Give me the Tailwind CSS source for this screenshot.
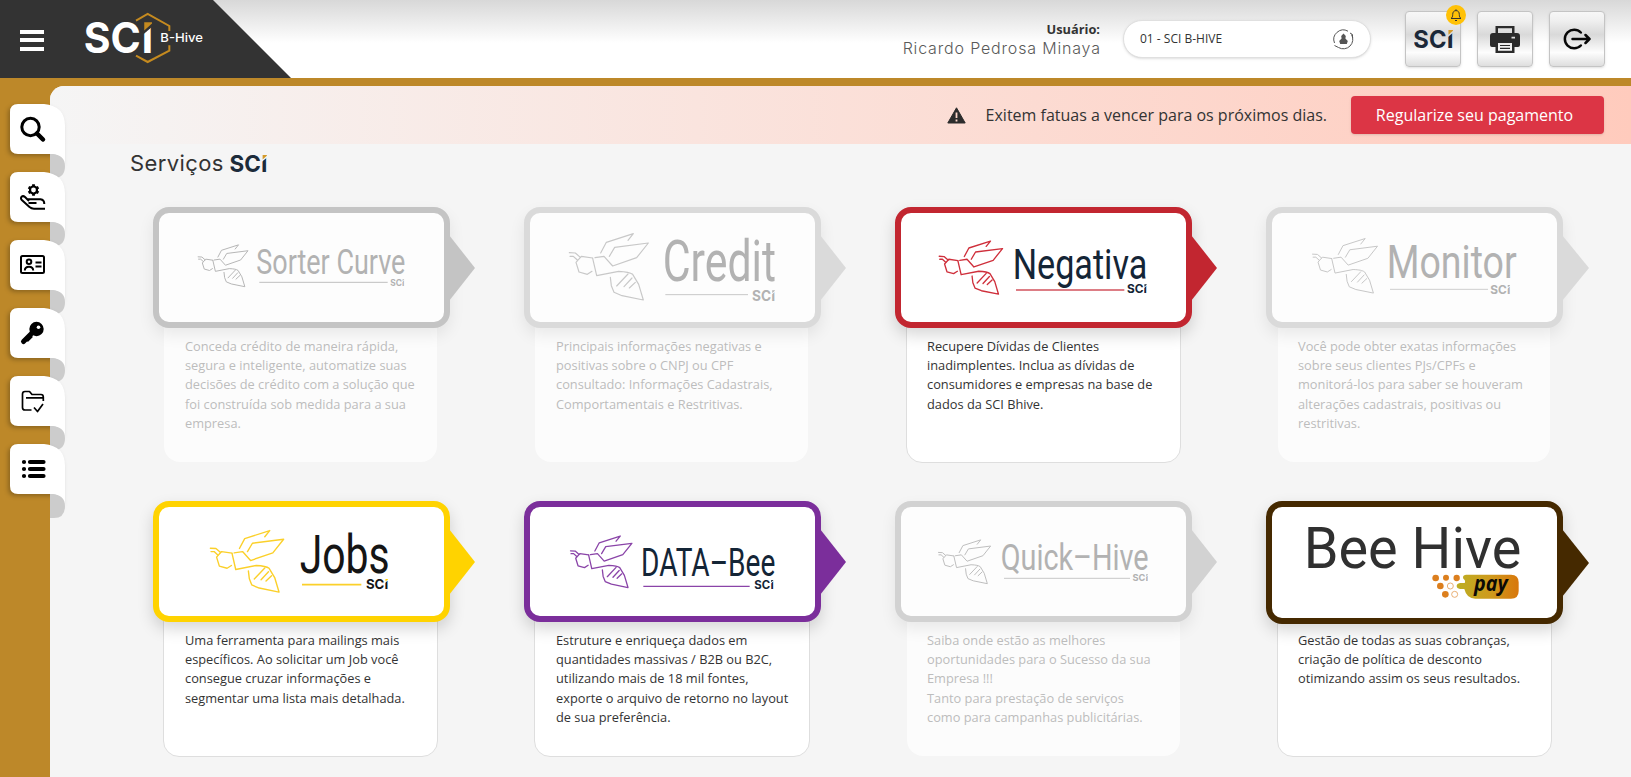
<!DOCTYPE html>
<html lang="pt-BR">
<head>
<meta charset="utf-8">
<title>SCI B-Hive</title>
<script src="https://cdn.jsdelivr.net/npm/@tailwindcss/browser@4"></script>
</head>
<body class="h-screen overflow-hidden bg-[#bd8829] font-['Open_Sans','Noto_Sans',sans-serif] text-[#333]">

<!-- shared symbols -->
<svg class="absolute size-0" aria-hidden="true">
  <defs>
    <clipPath id="stem"><path d="M90 23L112 4V52H90Z"/></clipPath>
    <linearGradient id="pay"><stop offset="0" stop-color="#bcae24"/><stop offset=".55" stop-color="#cf9a1c"/><stop offset="1" stop-color="#d8770c"/></linearGradient>
    <symbol id="bee" viewBox="176 112 242 206" overflow="visible">
      <g fill="none" stroke="currentColor" stroke-linejoin="round" stroke-linecap="round">
        <path d="M178 173L196 174L211 187M180 184L190 184L202 195"/>
        <path d="M248 189L214 184L198 202L207 231L232 238L246 229"/>
        <path d="M248 190L260 242L326 229C348 230 360 232 368 238L386 268L400 315L336 302L312 292L304 272L301 247"/>
        <path d="M255 188L282 184L308 213L380 188L415 144L314 157L298 184"/>
        <path d="M272 174L289 142L370 116L354 136"/>
        <path d="M320 273L354 237M342 275L366 249M358 279L376 262"/>
      </g>
    </symbol>
    <symbol id="sci" viewBox="0 0 108 50" overflow="visible">
      <g fill="currentColor" font-family="Inter, sans-serif" font-weight="700" font-size="68">
        <text x="-2" y="50" textLength="92" lengthAdjust="spacingAndGlyphs">SC</text>
        <text x="91" y="50" clip-path="url(#stem)">I</text>
      </g>
      <path class="fill-[var(--dot)]" d="M95.500 0H108V2L95.500 13Z"/>
    </symbol>
  </defs>
</svg>

<header class="flex h-[78px] items-center justify-between bg-linear-to-b from-[#d8d8d8] to-white to-55%">
  <div class="flex h-full w-[291px] items-center bg-[#333] pl-5 [clip-path:polygon(0_0,213px_0,291px_100%,0_100%)]">
    <button class="mt-0.5 flex flex-col gap-[4.500px]" aria-label="Menu">
      <span class="h-1 w-6 bg-white"></span><span class="h-1 w-6 bg-white"></span><span class="h-1 w-6 bg-white"></span>
    </button>
    <svg class="ml-[38px] h-[78px] w-[126px] text-white [--dot:#c58a1f]" viewBox="246 0 378 234">
      <path d="M408 62L443 42L508 78V93M508 136V152L443 186L408 167" fill="none" stroke="#c58a1f" stroke-width="6"/>
      <path d="M380 66H414L410 90H380ZM380 163H414L410 140H380Z" fill="#333"/>
      <use href="#sci" x="255" y="66" width="201" height="95"/>
      <text x="481" y="127" font-family="Inter, sans-serif" font-weight="500" font-size="37" fill="#fff" textLength="128" lengthAdjust="spacingAndGlyphs">B-Hive</text>
    </svg>
  </div>
  <div class="flex items-center pr-[26px]">
    <div class="mr-[23px] text-right">
      <p class="text-[12.800px] leading-[18px] font-bold">Usuário:</p>
      <p class="-mr-[0.800px] font-['Inter'] text-[16px] leading-5 font-light tracking-[0.830px] whitespace-nowrap text-[#5a5a5a]">Ricardo Pedrosa Minaya</p>
    </div>
    <div class="mr-[34px] flex h-[38px] w-[248px] items-center justify-between rounded-full border border-[#e0e0e0] bg-white pr-4 pl-4 text-xs shadow-sm">
      <span>01 - SCI B-HIVE</span>
      <svg class="size-[21px]" viewBox="0 0 21 21" fill="none" stroke="#555" stroke-width="1">
        <path d="M1.500 14A9.500 9.500 0 0 1 15 2.200M18.500 5.500A9.500 9.500 0 0 1 5.500 18.500M1.500 16.500L5.500 18.500M19.500 9V5.500L17 4"/>
        <path d="M10.500 4.500L12.800 7L12.400 9.500L14.800 12L13.800 15H7.200L6.200 12L8.600 9.500L8.200 7Z" fill="#555" stroke="none"/>
      </svg>
    </div>
    <div class="flex gap-4">
      <button class="relative flex size-14 items-center justify-center rounded border border-[#c4c4c4] bg-linear-[to_bottom,#f7f7f7_0%,#f0f0f0_15%,#d9d9d9_42%,#fdfdfd_75%,#dedede_100%] shadow-sm" aria-label="SCI">
        <svg class="h-[18px] w-[39px] text-[#1b2838] [--dot:#d39a2a]" viewBox="0 0 108 50"><use href="#sci" width="108" height="50"/></svg>
        <span class="absolute -top-[7px] -right-[6px] flex size-5 items-center justify-center rounded-full bg-[#ffc107]">
          <svg class="size-3.5" viewBox="0 0 14 14" fill="none" stroke="#333" stroke-width="1"><path d="M2 10.500H12C10.700 9.500 10.300 8.500 10.300 6.500C10.300 4 9 2.600 7 2.600S3.700 4 3.700 6.500C3.700 8.500 3.300 9.500 2 10.500ZM7 2.600V1.300M6 12.500H8"/></svg>
        </span>
      </button>
      <button class="flex size-14 items-center justify-center rounded border border-[#c4c4c4] bg-linear-[to_bottom,#f7f7f7_0%,#f0f0f0_15%,#d9d9d9_42%,#fdfdfd_75%,#dedede_100%] shadow-sm" aria-label="Imprimir">
        <svg class="h-[27px] w-[30px]" viewBox="0 0 30 27">
          <path fill="#2b2b2b" fill-rule="evenodd" d="M5.500 0H24.500V7H27Q30 7 30 10V19Q30 21 28 21H24.500V27H5.500V21H2Q0 21 0 19V10Q0 7 3 7H5.500ZM8 2.200V7H22V2.200ZM8 17V24.800H22V17ZM25 10.800H21.500V12.600H25Z"/>
          <path d="M10 19.500H20M10 22.300H20" stroke="#2b2b2b" stroke-width="1.200"/>
        </svg>
      </button>
      <button class="flex size-14 items-center justify-center rounded border border-[#c4c4c4] bg-linear-[to_bottom,#f7f7f7_0%,#f0f0f0_15%,#d9d9d9_42%,#fdfdfd_75%,#dedede_100%] shadow-sm" aria-label="Sair">
        <svg class="h-[22px] w-[28px]" viewBox="0 0 28 22" fill="none" stroke="#080808" stroke-width="2.500" stroke-linecap="round" stroke-linejoin="round"><path d="M17.800 4.500A9.300 9.300 0 1 0 17.800 17.500M9.500 11H26.500M22.500 7L26.500 11L22.500 15"/></svg>
      </button>
    </div>
  </div>
</header>

<main class="mt-2 flex h-[691px]">
  <aside class="relative z-10 w-[50px] shrink-0 pt-[18px] pl-2.5 text-black">
    <nav class="flex flex-col">
      <a class="h-[68px]" aria-label="Buscar"><svg class="h-[75px] w-[55px] max-w-none overflow-visible" viewBox="0 0 55 75">
        <path class="drop-shadow-[-2px_2px_2px_rgba(0,0,0,0.250)]" fill="#fff" d="M8 0H34Q55 2 55 22V62Q53 50 40 50H8Q0 50 0 42V8Q0 0 8 0Z"/>
        <path fill="#ccc" d="M40 50Q55 50 55 62Q55 74 44 74H40Z"/>
        <circle cx="20.500" cy="23" r="8.700" fill="none" stroke="currentColor" stroke-width="3"/><path d="M27 29.500L33 35.500" stroke="currentColor" stroke-width="4.500" stroke-linecap="round"/>
      </svg></a>
      <a class="h-[68px]" aria-label="Serviços"><svg class="h-[75px] w-[55px] max-w-none overflow-visible" viewBox="0 0 55 75">
        <path class="drop-shadow-[-2px_2px_2px_rgba(0,0,0,0.250)]" fill="#fff" d="M8 0H34Q55 2 55 22V62Q53 50 40 50H8Q0 50 0 42V8Q0 0 8 0Z"/>
        <path fill="#ccc" d="M40 50Q55 50 55 62Q55 74 44 74H40Z"/>
        <circle cx="23.500" cy="18" r="3.500" fill="none" stroke="currentColor" stroke-width="2.200"/>
        <path d="M23.500 12.200V14.500M23.500 21.500V23.800M18.500 15.200L20.500 16.300M26.500 19.700L28.500 20.800M28.500 15.200L26.500 16.300M20.500 19.700L18.500 20.800" stroke="currentColor" stroke-width="2.800"/>
        <path d="M35 36.700H24Q21.500 36.700 19.500 35L11.800 28C9.500 25.500 12.500 22.800 15 25L19 29M17 27.300H30.500Q34.300 27.800 34.300 32M18.500 31H26.500" fill="none" stroke="currentColor" stroke-width="2" stroke-linejoin="round"/>
      </svg></a>
      <a class="h-[68px]" aria-label="Cadastro"><svg class="h-[75px] w-[55px] max-w-none overflow-visible" viewBox="0 0 55 75">
        <path class="drop-shadow-[-2px_2px_2px_rgba(0,0,0,0.250)]" fill="#fff" d="M8 0H34Q55 2 55 22V62Q53 50 40 50H8Q0 50 0 42V8Q0 0 8 0Z"/>
        <path fill="#ccc" d="M40 50Q55 50 55 62Q55 74 44 74H40Z"/>
        <g fill="none" stroke="currentColor" stroke-width="2"><rect x="11" y="16" width="23" height="17" rx="1.500"/><circle cx="19" cy="21.800" r="2.300"/><path d="M14.800 30.500Q15 26.800 19 26.800T23.200 30.500M25.500 22.500H31.500M25.500 26.500H31.500"/></g>
      </svg></a>
      <a class="h-[68px]" aria-label="Senha"><svg class="h-[75px] w-[55px] max-w-none overflow-visible" viewBox="0 0 55 75">
        <path class="drop-shadow-[-2px_2px_2px_rgba(0,0,0,0.250)]" fill="#fff" d="M8 0H34Q55 2 55 22V62Q53 50 40 50H8Q0 50 0 42V8Q0 0 8 0Z"/>
        <path fill="#ccc" d="M40 50Q55 50 55 62Q55 74 44 74H40Z"/>
        <circle cx="26.500" cy="21" r="7.200"/><path d="M23 24L13.500 33.500" stroke="currentColor" stroke-width="5" stroke-linecap="round"/><path d="M17 33L22 28" stroke="currentColor" stroke-width="2.500"/><circle cx="28.500" cy="19.300" r="1.800" fill="#fff"/>
      </svg></a>
      <a class="h-[68px]" aria-label="Arquivos"><svg class="h-[75px] w-[55px] max-w-none overflow-visible" viewBox="0 0 55 75">
        <path class="drop-shadow-[-2px_2px_2px_rgba(0,0,0,0.250)]" fill="#fff" d="M8 0H34Q55 2 55 22V62Q53 50 40 50H8Q0 50 0 42V8Q0 0 8 0Z"/>
        <path fill="#ccc" d="M40 50Q55 50 55 62Q55 74 44 74H40Z"/>
        <path d="M21.500 34H15Q12.500 34 12.500 31.500V18Q12.500 15.500 15 15.500H19.500L22 18.500H31Q33.300 18.500 33.300 21V25M16 21.800H33M24 31.500L27.500 35.500L33 28" fill="none" stroke="currentColor" stroke-width="1.700" stroke-linejoin="round"/>
      </svg></a>
      <a class="h-[68px]" aria-label="Lista"><svg class="h-[75px] w-[55px] max-w-none overflow-visible" viewBox="0 0 55 75">
        <path class="drop-shadow-[-2px_2px_2px_rgba(0,0,0,0.250)]" fill="#fff" d="M8 0H34Q55 2 55 22V62Q53 50 40 50H8Q0 50 0 42V8Q0 0 8 0Z"/>
        <path fill="#ccc" d="M40 50Q55 50 55 62Q55 74 44 74H40Z"/>
        <path d="M14 18H14.010M20 18H33.500M14 25H14.010M20 25H33.500M14 32H14.010M20 32H33.500" stroke="currentColor" stroke-width="4.200" stroke-linecap="round"/>
      </svg></a>
    </nav>
  </aside>

  <section class="flex-1 overflow-hidden rounded-tl-[14px] bg-[#f5f5f5]">
    <div class="flex h-[58px] items-center justify-end bg-linear-to-r from-[#f5f5f5] to-[#ffcbbd] pr-[27px]">
      <svg class="mr-[20px] h-[17px] w-[19px]" viewBox="0 0 19 17"><path d="M9.500 .8L18.200 16H.8Z" fill="#2c2c2c" stroke="#2c2c2c" stroke-linejoin="round"/><path d="M9.500 5.500V11M9.500 12.500V14.500" stroke="#fcd6cb" stroke-width="1.800"/></svg>
      <p class="mr-6 text-base whitespace-nowrap">Exitem fatuas a vencer para os próximos dias.</p>
      <button class="h-[38px] w-[253px] rounded-[4px] bg-[#dc3545] pr-1.5 text-base text-white shadow-sm">Regularize seu pagamento</button>
    </div>

    <h1 class="flex h-[63px] items-start gap-1.5 pt-[5px] pl-20 text-[22px] leading-7 text-[#333]">
      <span class="font-['Inter'] font-normal tracking-[0.400px]">Serviços</span>
      <svg class="mt-[6px] h-[17px] w-[37px] text-[#1c2b3a] [--dot:#d39a2a]" viewBox="0 0 108 50"><use href="#sci" width="108" height="50"/></svg>
    </h1>

    <div class="grid auto-rows-[294px] grid-cols-[repeat(4,371px)] pl-[103px] text-[12.800px] leading-[19.200px]">

      <article>
        <div class="relative z-10 h-[121px] w-[297px] rounded-[16px] border-[6px] border-[#c4c4c4] bg-[#fdfdfd] shadow-[0_7px_16px_rgba(0,0,0,0.080)]">
          <svg class="h-[109px] w-[285px] text-[#b2b2b2] [--dot:#b2b2b2]" viewBox="56 54 855 327">
            <use href="#bee" x="172" y="147" width="153" height="130" stroke-width="4.500"/>
            <text x="348" y="236" font-family="Roboto" font-size="107" fill="currentColor" textLength="447" lengthAdjust="spacingAndGlyphs">Sorter Curve</text>
            <path d="M357 262H742" stroke="currentColor" stroke-width="2.500"/>
            <use href="#sci" x="749" y="253" width="44" height="19"/>
          </svg>
          <span class="absolute top-[22px] -right-[31px] h-[66px] w-[26px] bg-[#c4c4c4] [clip-path:polygon(0_0,100%_50%,0_100%)]"></span>
        </div>
        <p class="-mt-[21px] ml-[11px] h-[155px] w-[273px] rounded-[16px] bg-[#fcfcfc] pt-[30px] pl-[21px] whitespace-nowrap text-[#bdbdbd]">Conceda crédito de maneira rápida,<br>segura e inteligente, automatize suas<br>decisões de crédito com a solução que<br>foi construída sob medida para a sua<br>empresa.</p>
      </article>

      <article>
        <div class="relative z-10 h-[121px] w-[297px] rounded-[16px] border-[6px] border-[#dadada] bg-[#fdfdfd] shadow-[0_7px_16px_rgba(0,0,0,0.080)]">
          <svg class="h-[109px] w-[285px] text-[#b2b2b2] [--dot:#b2b2b2]" viewBox="60 54 855 327">
            <use href="#bee" x="176" y="112" width="242" height="206" stroke-width="3.500" class="text-[#c8c8c8]"/>
            <text x="458" y="259" font-family="Roboto" font-size="170" fill="currentColor" textLength="340" lengthAdjust="spacingAndGlyphs">Credit</text>
            <path d="M466 299H714" stroke="#c8c8c8" stroke-width="3"/>
            <use href="#sci" x="726" y="286" width="70" height="31"/>
          </svg>
          <span class="absolute top-[22px] -right-[31px] h-[66px] w-[26px] bg-[#dadada] [clip-path:polygon(0_0,100%_50%,0_100%)]"></span>
        </div>
        <p class="-mt-[21px] ml-[11px] h-[155px] w-[273px] rounded-[16px] bg-[#fcfcfc] pt-[30px] pl-[21px] whitespace-nowrap text-[#bdbdbd]">Principais informações negativas e<br>positivas sobre o CNPJ ou CPF<br>consultado: Informações Cadastrais,<br>Comportamentais e Restritivas.</p>
      </article>

      <article>
        <div class="relative z-10 h-[121px] w-[297px] rounded-[16px] border-[6px] border-[#c22630] bg-white shadow-[0_7px_16px_rgba(0,0,0,0.160)]">
          <svg class="h-[109px] w-[285px] text-[#142536] [--dot:#142536]" viewBox="63 54 855 327">
            <use href="#bee" x="176" y="135" width="194" height="165" stroke-width="5" class="text-[#cf2f3b]"/>
            <text x="398" y="251" font-family="Roboto" font-size="130" fill="currentColor" textLength="404" lengthAdjust="spacingAndGlyphs">Negativa</text>
            <path d="M408 285H733" stroke="#d2525c" stroke-width="5"/>
            <use href="#sci" x="742" y="268" width="58" height="27"/>
          </svg>
          <span class="absolute top-[22px] -right-[31px] h-[66px] w-[26px] bg-[#c22630] [clip-path:polygon(0_0,100%_50%,0_100%)]"></span>
        </div>
        <p class="-mt-[21px] ml-[11px] h-[156px] w-[275px] rounded-[16px] border border-[#dedede] bg-white pt-[29px] pl-5 whitespace-nowrap">Recupere Dívidas de Clientes<br>inadimplentes. Inclua as dívidas de<br>consumidores e empresas na base de<br>dados da SCI Bhive.</p>
      </article>

      <article>
        <div class="relative z-10 h-[121px] w-[297px] rounded-[16px] border-[6px] border-[#dadada] bg-[#fdfdfd] shadow-[0_7px_16px_rgba(0,0,0,0.080)]">
          <svg class="h-[109px] w-[285px] text-[#b2b2b2] [--dot:#b2b2b2]" viewBox="66 54 855 327">
            <use href="#bee" x="186" y="127" width="199" height="170" stroke-width="3.500" class="text-[#c4c4c4]"/>
            <text x="410" y="248" font-family="Roboto" font-size="138" fill="currentColor" textLength="390" lengthAdjust="spacingAndGlyphs">Monitor</text>
            <path d="M420 283H714" stroke="#c4c4c4" stroke-width="2.500"/>
            <use href="#sci" x="722" y="270" width="58" height="27"/>
          </svg>
          <span class="absolute top-[22px] -right-[32px] h-[66px] w-[27px] bg-[#dadada] [clip-path:polygon(0_0,100%_50%,0_100%)]"></span>
        </div>
        <p class="-mt-[21px] ml-[12px] h-[155px] w-[272px] rounded-[16px] bg-[#fcfcfc] pt-[30px] pl-5 whitespace-nowrap text-[#bdbdbd]">Você pode obter exatas informações<br>sobre seus clientes PJs/CPFs e<br>monitorá-los para saber se houveram<br>alterações cadastrais, positivas ou<br>restritivas.</p>
      </article>

      <article>
        <div class="relative z-10 h-[121px] w-[297px] rounded-[16px] border-[6px] border-[#ffd300] bg-white shadow-[0_7px_16px_rgba(0,0,0,0.160)]">
          <svg class="h-[109px] w-[285px] text-[#151515] [--dot:#ffd300]" viewBox="56 51 855 327">
            <use href="#bee" x="208" y="118" width="225" height="191" stroke-width="4.500" class="text-[#fbd02a]"/>
            <text x="478" y="249" font-family="Roboto" font-size="163" fill="currentColor" textLength="270" lengthAdjust="spacingAndGlyphs">Jobs</text>
            <path d="M485 284H663" stroke="#fbd02a" stroke-width="5"/>
            <use href="#sci" x="678" y="267" width="65" height="30"/>
          </svg>
          <span class="absolute top-[22px] -right-[31px] h-[66px] w-[26px] bg-[#ffd300] [clip-path:polygon(0_0,100%_50%,0_100%)]"></span>
        </div>
        <p class="-mt-[21px] ml-[10px] h-[156px] w-[275px] rounded-[16px] border border-[#dedede] bg-white pt-[29px] pl-[21px] whitespace-nowrap">Uma ferramenta para mailings mais<br>específicos. Ao solicitar um Job você<br>consegue cruzar informações e<br>segmentar uma lista mais detalhada.</p>
      </article>

      <article>
        <div class="relative z-10 h-[121px] w-[297px] rounded-[16px] border-[6px] border-[#7b2e9b] bg-white shadow-[0_7px_16px_rgba(0,0,0,0.160)]">
          <svg class="h-[109px] w-[285px] text-[#142536] [--dot:#142536]" viewBox="60 51 855 327">
            <use href="#bee" x="180" y="135" width="188" height="160" stroke-width="5" class="text-[#8a44a8]"/>
            <text x="393" y="257" font-family="Roboto" font-size="116" fill="currentColor" textLength="403" lengthAdjust="spacingAndGlyphs">DATA–Bee</text>
            <path d="M400 289H719" stroke="#8a44a8" stroke-width="4"/>
            <use href="#sci" x="734" y="270" width="56" height="26"/>
          </svg>
          <span class="absolute top-[22px] -right-[31px] h-[66px] w-[26px] bg-[#7b2e9b] [clip-path:polygon(0_0,100%_50%,0_100%)]"></span>
        </div>
        <p class="-mt-[21px] ml-[10px] h-[156px] w-[276px] rounded-[16px] border border-[#dedede] bg-white pt-[29px] pl-[21px] whitespace-nowrap">Estruture e enriqueça dados em<br>quantidades massivas / B2B ou B2C,<br>utilizando mais de 18 mil fontes,<br>exporte o arquivo de retorno no layout<br>de sua preferência.</p>
      </article>

      <article>
        <div class="relative z-10 h-[121px] w-[297px] rounded-[16px] border-[6px] border-[#d2d2d2] bg-[#fdfdfd] shadow-[0_7px_16px_rgba(0,0,0,0.080)]">
          <svg class="h-[109px] w-[285px] text-[#b2b2b2] [--dot:#b2b2b2]" viewBox="63 51 855 327">
            <use href="#bee" x="174" y="147" width="160" height="136" stroke-width="4.500" class="text-[#bdbdbd]"/>
            <text x="362" y="241" font-family="Roboto" font-size="113" fill="currentColor" textLength="444" lengthAdjust="spacingAndGlyphs">Quick–Hive</text>
            <path d="M372 265H750" stroke="#bdbdbd" stroke-width="2.500"/>
            <use href="#sci" x="758" y="253" width="46" height="21"/>
          </svg>
          <span class="absolute top-[22px] -right-[31px] h-[66px] w-[26px] bg-[#d2d2d2] [clip-path:polygon(0_0,100%_50%,0_100%)]"></span>
        </div>
        <p class="-mt-[21px] ml-[12px] h-[155px] w-[273px] rounded-[16px] bg-[#fcfcfc] pt-[30px] pl-5 whitespace-nowrap text-[#bdbdbd]">Saiba onde estão as melhores<br>oportunidades para o Sucesso da sua<br>Empresa !!!<br>Tanto para prestação de serviços<br>como para campanhas publicitárias.</p>
      </article>

      <article>
        <div class="relative z-10 h-[123px] w-[297px] rounded-[16px] border-[6px] border-[#452900] bg-white shadow-[0_7px_16px_rgba(0,0,0,0.160)]">
          <svg class="h-[111px] w-[285px]" viewBox="66 51 855 333">
            <text x="161" y="233" font-family="Roboto" font-size="174" fill="#303030" textLength="653" lengthAdjust="spacingAndGlyphs">Bee Hive</text>
            <g fill="#dc7f1e"><circle cx="557" cy="264" r="10"/><circle cx="588" cy="263" r="9"/><circle cx="620" cy="264" r="9.500"/><circle cx="571" cy="288" r="10"/><circle cx="586" cy="313" r="10"/></g>
            <g fill="#fff" stroke="#e3a05c" stroke-width="2.500"><circle cx="601" cy="288" r="9"/><circle cx="614" cy="313" r="9"/></g>
            <path fill="url(#pay)" d="M648 254H783Q806 254 806 277V303Q806 326 783 326H676Q650 326 643 297H630Q620 295 620 288T630 279H644Q648 272 640 266Q636 255 648 254Z"/>
            <text x="672" y="304" font-family="Open Sans" font-weight="700" font-style="italic" font-size="62" fill="#0c0a06" textLength="101" lengthAdjust="spacingAndGlyphs">pay</text>
          </svg>
          <span class="absolute top-[22px] -right-[32px] h-[68px] w-[27px] bg-[#452900] [clip-path:polygon(0_0,100%_50%,0_100%)]"></span>
        </div>
        <p class="-mt-[23px] ml-[11px] h-[156px] w-[275px] rounded-[16px] border border-[#dedede] bg-white pt-[29px] pl-5 whitespace-nowrap">Gestão de todas as suas cobranças,<br>criação de política de desconto<br>otimizando assim os seus resultados.</p>
      </article>
    </div>
  </section>
</main>
</body>
</html>
